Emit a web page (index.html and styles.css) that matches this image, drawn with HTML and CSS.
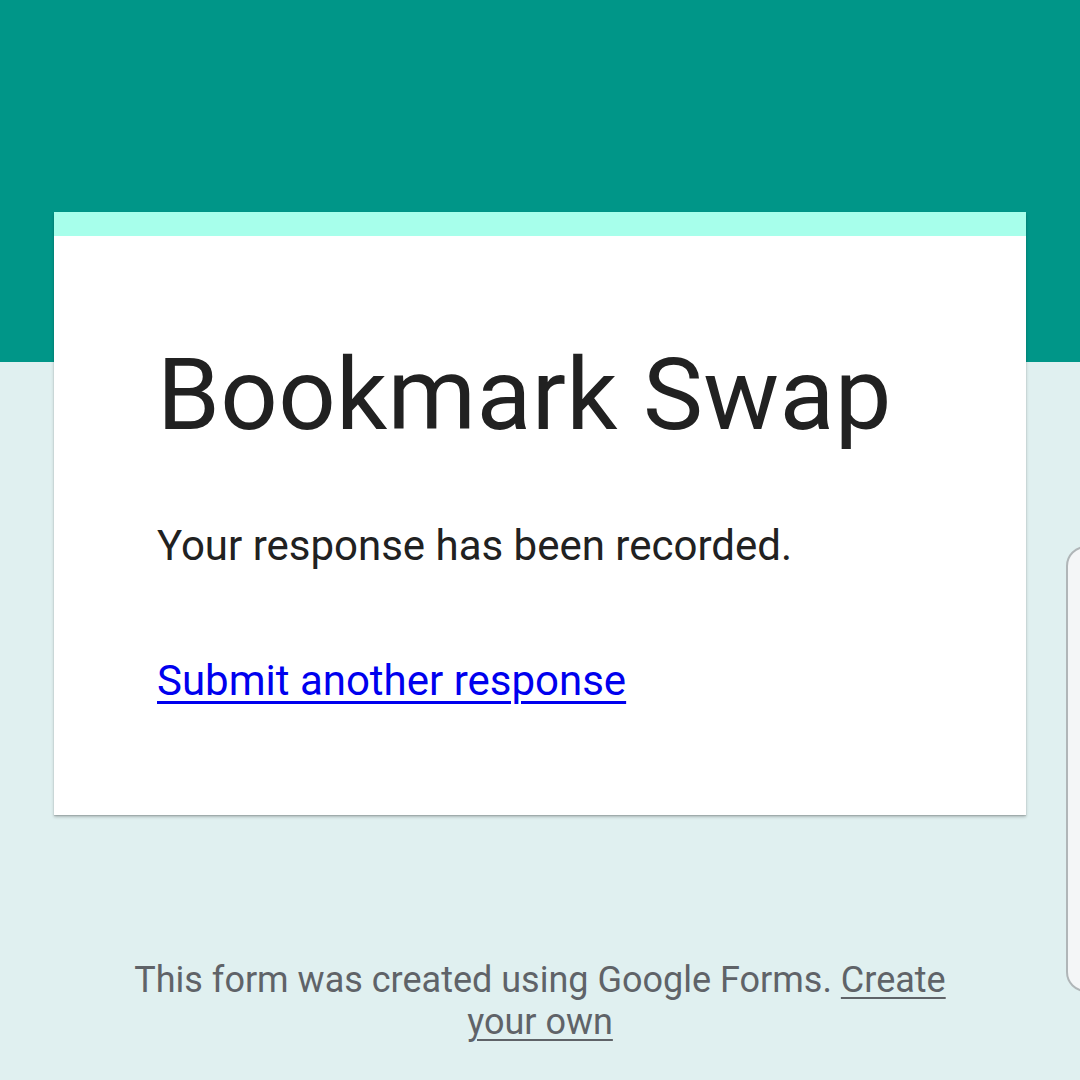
FILE: index.html
```html
<!DOCTYPE html>
<html>
<head>
<meta charset="utf-8">
<link rel="stylesheet" href="styles.css">
</head>
<body>
<div class="page">
  <div class="header"></div>
  <div class="content">
    <div class="card">
      <div class="accent"></div>
      <div class="card-body">
        <h1 class="title">Bookmark Swap</h1>
        <p class="msg">Your response has been recorded.</p>
        <a class="again" href="#">Submit another response</a>
      </div>
    </div>
    <div class="footer">This form was created using Google Forms. <a class="own" href="#">Create your own</a></div>
  </div>
  <div class="scroll"></div>
</div>
</body>
</html>
```
FILE: styles.css
```css
html, body {
  margin: 0;
  padding: 0;
}
body {
  width: 1080px;
  height: 1080px;
  overflow: hidden;
  background: #e0f0f0;
  font-family: Roboto, "Noto Sans", sans-serif;
}
.page {
  position: relative;
  width: 1080px;
  height: 1080px;
}
.header {
  height: 362px;
  background: #009688;
}
.content {
  margin-top: -150px;
  display: flex;
  flex-direction: column;
  align-items: center;
}
.card {
  width: 972px;
  align-self: flex-start;
  margin-left: 54px;
  background: #fff;
  box-shadow: 0 2px 3px rgba(0,0,0,0.22), 0 1px 1px rgba(0,0,0,0.12);
}
.accent {
  height: 24px;
  background: #a7ffeb;
}
.card-body {
  padding: 0 103px 0 103px;
  height: 579px;
  display: flex;
  flex-direction: column;
}
.title {
  margin: 100px 0 0 0;
  font-size: 101px;
  font-weight: 400;
  line-height: 118px;
  color: #212121;
  white-space: nowrap;
  letter-spacing: 0.3px;
}
.msg {
  margin: 66px 0 0 0;
  font-size: 42px;
  line-height: 52px;
  color: #212121;
}
.again {
  margin-top: 83px;
  align-self: flex-start;
  font-size: 42px;
  line-height: 52px;
  color: #0000ee;
  text-decoration: underline;
  text-decoration-thickness: 3px;
  text-underline-offset: 6px;
}
.footer {
  margin-top: 144px;
  width: 850px;
  text-align: center;
  font-size: 36px;
  line-height: 42px;
  color: #5f6368;
}
.own {
  color: #5f6368;
  text-decoration: underline;
  text-decoration-thickness: 2px;
  text-underline-offset: 5px;
}
.scroll {
  position: absolute;
  left: 1066px;
  top: 546px;
  width: 40px;
  height: 442px;
  border: 2px solid #b0b6b8;
  border-radius: 20px;
  background: #f4f6f7;
}
```
